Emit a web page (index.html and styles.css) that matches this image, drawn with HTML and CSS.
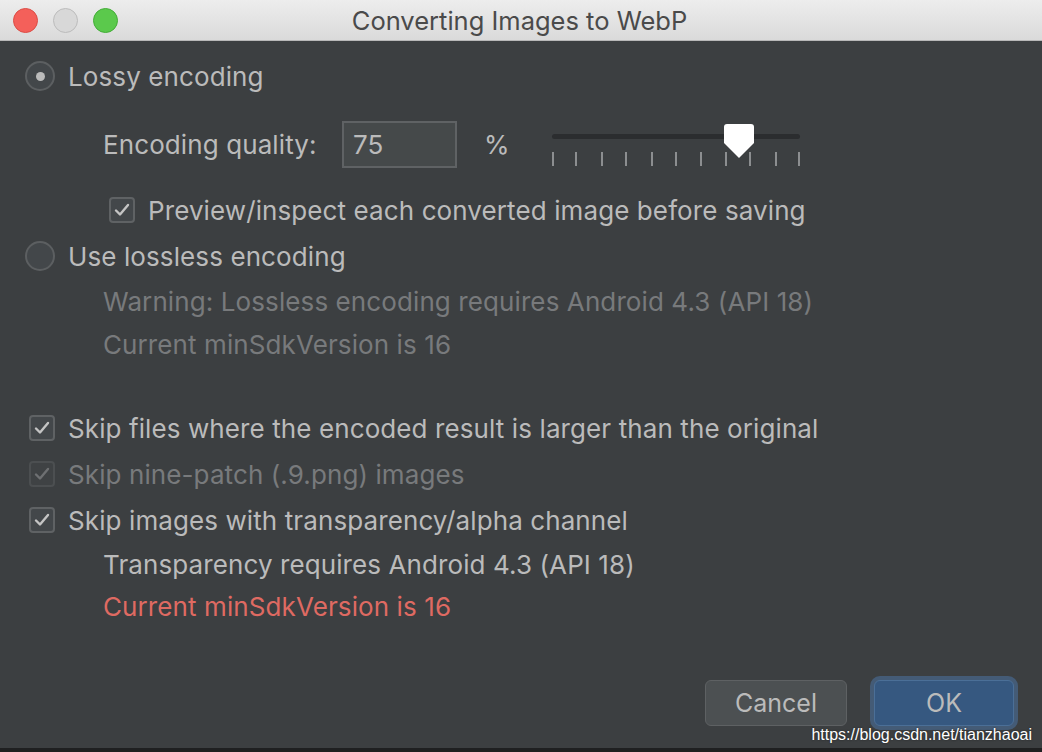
FILE: index.html
```html
<!DOCTYPE html>
<html lang="en">
<head>
  <meta charset="UTF-8">
  <title>Converting Images to WebP</title>
  <link rel="stylesheet" href="styles.css">
</head>
<body>
  <div class="dialog">
    <!-- Title bar -->
    <div class="titlebar">
      <div class="lights">
        <span class="light red"></span>
        <span class="light gray"></span>
        <span class="light green"></span>
      </div>
      <div class="title">Converting Images to WebP</div>
    </div>

    <div class="content">
      <div class="row row-lossy">
        <span class="radio checked"></span>
        <span>Lossy encoding</span>
      </div>

      <div class="row row-quality">
        <span class="label">Encoding quality:</span>
        <div class="field">75</div>
        <span class="percent">%</span>
        <svg class="slider" width="252" height="48" viewBox="0 0 252 48">
          <rect x="1" y="12" width="248" height="5" rx="2.5" fill="#2b2d2f"/>
          <g stroke="#8c8e90" stroke-width="2">
            <line x1="2" y1="30" x2="2" y2="44"/>
            <line x1="25" y1="30" x2="25" y2="44"/>
            <line x1="51" y1="30" x2="51" y2="44"/>
            <line x1="75" y1="30" x2="75" y2="44"/>
            <line x1="101" y1="30" x2="101" y2="44"/>
            <line x1="125" y1="30" x2="125" y2="44"/>
            <line x1="150" y1="30" x2="150" y2="44"/>
            <line x1="175" y1="30" x2="175" y2="44"/>
            <line x1="199" y1="30" x2="199" y2="44"/>
            <line x1="225" y1="30" x2="225" y2="44"/>
            <line x1="248" y1="30" x2="248" y2="44"/>
          </g>
          <path d="M173 5 Q173 2 176 2 L200 2 Q203 2 203 5 L203 21 L188 36 L173 21 Z" fill="#ffffff"/>
        </svg>
      </div>

      <div class="row row-preview">
        <span class="check"><svg width="16" height="14" viewBox="0 0 16 14"><path d="M2 7.5 L6 11.5 L14 2" fill="none" stroke="#c4c4c4" stroke-width="2.4" stroke-linecap="round" stroke-linejoin="round"/></svg></span>
        <span>Preview/inspect each converted image before saving</span>
      </div>

      <div class="row row-lossless">
        <span class="radio"></span>
        <span>Use lossless encoding</span>
      </div>
      <div class="row row-note muted">Warning: Lossless encoding requires Android 4.3 (API 18)</div>
      <div class="row row-note2 muted">Current minSdkVersion is 16</div>

      <div class="row row-skip1">
        <span class="check"><svg width="16" height="14" viewBox="0 0 16 14"><path d="M2 7.5 L6 11.5 L14 2" fill="none" stroke="#c4c4c4" stroke-width="2.4" stroke-linecap="round" stroke-linejoin="round"/></svg></span>
        <span>Skip files where the encoded result is larger than the original</span>
      </div>
      <div class="row row-skip muted">
        <span class="check disabled"><svg width="16" height="14" viewBox="0 0 16 14"><path d="M2 7.5 L6 11.5 L14 2" fill="none" stroke="#6e7072" stroke-width="2.4" stroke-linecap="round" stroke-linejoin="round"/></svg></span>
        <span>Skip nine-patch (.9.png) images</span>
      </div>
      <div class="row row-skip">
        <span class="check"><svg width="16" height="14" viewBox="0 0 16 14"><path d="M2 7.5 L6 11.5 L14 2" fill="none" stroke="#c4c4c4" stroke-width="2.4" stroke-linecap="round" stroke-linejoin="round"/></svg></span>
        <span>Skip images with transparency/alpha channel</span>
      </div>
      <div class="row row-note3">Transparency requires Android 4.3 (API 18)</div>
      <div class="row row-note4 error">Current minSdkVersion is 16</div>

      <div class="footer">
        <button class="btn">Cancel</button>
        <button class="btn primary">OK</button>
      </div>
    </div>

    <div class="watermark">https://blog.csdn.net/tianzhaoai</div>
  </div>
</body>
</html>
```
FILE: styles.css
```css
html, body {
  margin: 0;
  padding: 0;
}
body {
  background: #1f2021;
  font-family: Inter, "Noto Sans", sans-serif;
  font-size: 26px;
  letter-spacing: 0.1px;
  color: #bbbbbb;
  width: 1042px;
  height: 752px;
  overflow: hidden;
}
.dialog {
  position: relative;
  height: 748px;
  background: #3c3f41;
}
.titlebar {
  height: 41px;
  background: linear-gradient(#ededed, #dadada);
  border-bottom: 1px solid #b8b8b8;
  display: flex;
  align-items: center;
  box-sizing: border-box;
}
.lights {
  display: flex;
  gap: 15px;
  padding-left: 13px;
}
.light {
  width: 25px;
  height: 25px;
  border-radius: 50%;
  box-sizing: border-box;
}
.red {
  background: #f4605a;
  border: 1px solid #dc4d46;
}
.gray {
  background: #d8d8d8;
  border: 1px solid #bcbcbc;
}
.green {
  background: #5bc94c;
  border: 1px solid #43ad37;
}
.title {
  flex: 1;
  text-align: center;
  color: #4a4a4a;
  font-size: 25.5px;
  letter-spacing: 0;
  margin-right: 121px;
}
.content {
  padding: 0 28px 0 25px;
  display: flex;
  flex-direction: column;
}
.row {
  display: flex;
  align-items: center;
  height: 40px;
  white-space: nowrap;
}
.muted {
  color: #787a7c;
}
.error {
  color: #df6a62;
}
.radio {
  width: 30px;
  height: 30px;
  box-sizing: border-box;
  border-radius: 50%;
  border: 2px solid #5c5f61;
  background: #43474a;
  margin-right: 13px;
  display: flex;
  align-items: center;
  justify-content: center;
}
.radio.checked::after {
  content: "";
  width: 9px;
  height: 9px;
  border-radius: 50%;
  background: #bbbbbb;
}
.check {
  width: 26px;
  height: 26px;
  box-sizing: border-box;
  border: 2px solid #5f6264;
  border-radius: 4px;
  background: #43474a;
  margin-left: 4px;
  margin-right: 13px;
  display: flex;
  align-items: center;
  justify-content: center;
}
.check.disabled {
  border-color: #4c4f51;
  background: #3f4244;
}
.row-lossy {
  margin-top: 15px;
}
.row-quality {
  height: 48px;
  margin-top: 24px;
  padding-left: 78px;
}
.label {
  width: 239px;
}
.field {
  width: 115px;
  height: 47px;
  box-sizing: border-box;
  border: 2px solid #5f6264;
  background: #45494a;
  padding-left: 9px;
  display: flex;
  align-items: center;
}
.percent {
  width: 67px;
  margin-left: 27px;
}
.slider {
  display: block;
  margin-top: 4px;
}
.row-preview {
  margin-top: 22px;
  padding-left: 80px;
}
.row-lossless {
  margin-top: 6px;
}
.row-note {
  margin-top: 5px;
  padding-left: 78px;
}
.row-note2 {
  margin-top: 3px;
  padding-left: 78px;
}
.row-skip1 {
  margin-top: 44px;
}
.row-skip {
  margin-top: 6px;
}
.row-note3 {
  margin-top: 4px;
  padding-left: 78px;
}
.row-note4 {
  margin-top: 2px;
  padding-left: 78px;
}
.footer {
  display: flex;
  justify-content: flex-end;
  gap: 27px;
  margin-top: 50px;
}
.btn {
  font-family: inherit;
  font-size: 25px;
  color: #bbbbbb;
  width: 142px;
  height: 46px;
  margin-top: 4px;
  background: #4c5052;
  border: 1px solid #5e6163;
  border-radius: 6px;
}
.btn.primary {
  width: 140px;
  background: #365880;
  border-color: #4b6f97;
  box-shadow: 0 0 0 4px #4a6d96a0;
}
.watermark {
  position: absolute;
  right: 10px;
  bottom: 4px;
  font-family: "Liberation Sans", Arial, sans-serif;
  font-size: 16px;
  letter-spacing: 0;
  color: #ffffff;
  text-shadow: 0 0 2px #222222;
}
```
